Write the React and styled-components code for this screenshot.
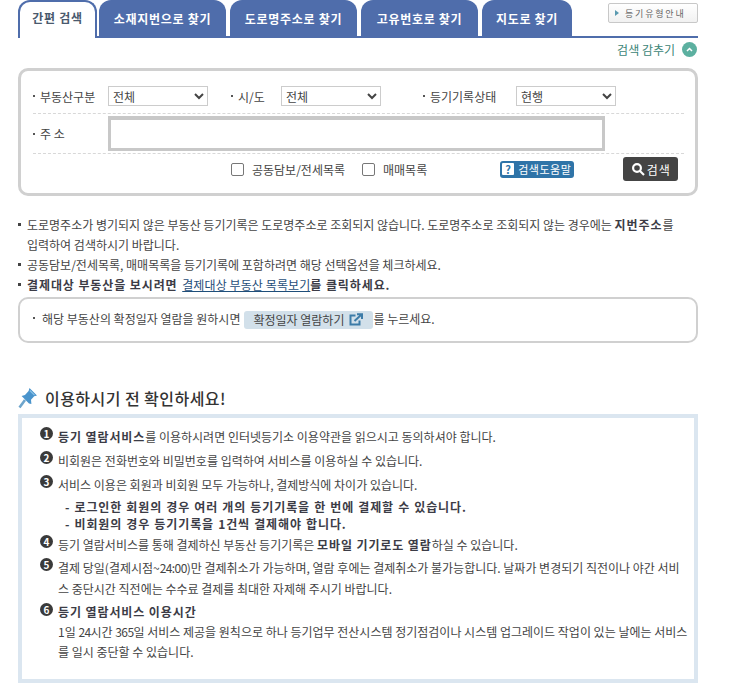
import React from 'react';
import styled, { createGlobalStyle } from 'styled-components';

const GlobalStyle = createGlobalStyle`
  html, body {
    margin: 0;
    padding: 0;
    background: #fff;
  }
  body {
    font-family: "Noto Sans CJK KR", "Noto Sans", sans-serif;
    font-size: 12px;
    color: #444;
  }
`;

const Page = styled.div`
  width: 680px;
  margin-left: 18px;
  display: flex;
  flex-direction: column;
`;

const TabBar = styled.div`
  display: flex;
  align-items: flex-end;
  height: 38px;
  border-bottom: 2px solid #4f6dab;
  box-sizing: border-box;
  justify-content: space-between;
`;

const Tabs = styled.div`
  display: flex;
  align-items: flex-end;
  height: 36px;
`;

const Tab = styled.div`
  width: ${props => props.w}px;
  height: ${props => (props.active ? 38 : 36)}px;
  margin-right: ${props => props.gap}px;
  margin-bottom: ${props => (props.active ? -2 : 0)}px;
  box-sizing: border-box;
  border-radius: 12px 12px 0 0;
  background: ${props => (props.active ? '#fff' : '#4f6dab')};
  border: ${props => (props.active ? '2px solid #4f6dab' : 'none')};
  border-bottom: none;
  color: ${props => (props.active ? '#4a5a6e' : '#fff')};
  font-size: 12px;
  font-weight: 700;
  letter-spacing: 0.7px;
  display: flex;
  justify-content: center;
  padding-top: ${props => (props.active ? 7 : 10)}px;
  line-height: 18px;
`;

const GuideButton = styled.div`
  width: 90px;
  height: 20px;
  margin-bottom: 13px;
  box-sizing: border-box;
  border: 1px solid #c8c8c8;
  border-radius: 2px;
  background: linear-gradient(#fff, #f1f1f1);
  display: flex;
  align-items: center;
  padding-left: 6px;
  gap: 6px;
  font-size: 9px;
  color: #666;
  letter-spacing: 1.8px;
  white-space: nowrap;
`;

const GuideArrow = styled.span`
  width: 0;
  height: 0;
  border-left: 4px solid #5a9ab0;
  border-top: 3px solid transparent;
  border-bottom: 3px solid transparent;
`;

const HideRow = styled.div`
  height: 30px;
  display: flex;
  justify-content: flex-end;
  align-items: center;
  gap: 7px;
  padding: 0 1px 7px 0;
  box-sizing: border-box;
  color: #3c8577;
  font-size: 12px;
`;

const HideIcon = styled.span`
  width: 15px;
  height: 15px;
  border-radius: 50%;
  background: #5cb0a0;
  display: flex;
  align-items: center;
  justify-content: center;
`;

const SearchBox = styled.div`
  height: 128px;
  box-sizing: border-box;
  border: 3px solid #d0d0d0;
  border-radius: 10px;
  padding: 11px 11px 0 12px;
`;

const FieldRow = styled.div`
  display: flex;
  align-items: center;
  height: 28px;
  border-bottom: 1px dashed #d8d8d8;
  padding-bottom: 3px;
`;

const AddressRow = styled.div`
  display: flex;
  align-items: center;
  height: 40px;
  box-sizing: border-box;
  border-bottom: 1px dashed #d8d8d8;
`;

const OptionRow = styled.div`
  display: flex;
  align-items: center;
  height: 30px;
  padding-left: 198px;
`;

const Label = styled.span`
  width: ${props => props.w}px;
  font-size: 12px;
  color: #444;
  display: flex;
  align-items: center;
  gap: 5px;
  flex-shrink: 0;
  white-space: nowrap;
`;

const Dot = styled.span`
  width: 2px;
  height: 2px;
  background: #555;
  flex-shrink: 0;
`;

const SelectBox = styled.select`
  width: ${props => props.w}px;
  height: 20px;
  border: 1px solid #ccc;
  background: #fff;
  color: #444;
  font-family: inherit;
  font-size: 12px;
  padding: 0;
  margin-right: ${props => props.gap}px;
  flex-shrink: 0;
  border-radius: 0;
`;

const AddressInput = styled.input`
  width: 497px;
  height: 35px;
  box-sizing: border-box;
  border: solid #c8c8c8;
  border-width: 4px 3px 3px;
  padding: 0 6px;
  outline: none;
`;

const Check = styled.span`
  width: 11px;
  height: 11px;
  border: 1px solid #777;
  border-radius: 2px;
  margin-right: 8px;
`;

const OptionText = styled.span`
  margin-right: ${props => props.gap}px;
  font-size: 12px;
  color: #444;
  white-space: nowrap;
`;

const HelpBadge = styled.span`
  display: flex;
  align-items: center;
  height: 17px;
  width: 74px;
  box-sizing: border-box;
  border-radius: 3px;
  background: #2f74a8;
  color: #fff;
  font-size: 11px;
  letter-spacing: 0.5px;
  padding: 0 0 0 2px;
  gap: 4px;
  white-space: nowrap;
`;

const HelpMark = styled.span`
  width: 12px;
  height: 12px;
  background: #fff;
  color: #2f74a8;
  font-size: 11px;
  font-weight: 700;
  line-height: 12px;
  text-align: center;
  border-radius: 1px;
`;

const SearchButton = styled.span`
  width: 55px;
  height: 24px;
  margin-left: 49px;
  background: #444;
  border-radius: 3px;
  color: #fff;
  font-size: 12px;
  letter-spacing: 1px;
  display: flex;
  align-items: center;
  justify-content: center;
  gap: 2px;
`;

const Notes = styled.ul`
  list-style: none;
  margin: 19px 0 0;
  padding: 0;
  font-size: 12px;
  line-height: 20px;
  color: #444;
`;

const Note = styled.li`
  position: relative;
  padding-left: 9px;
  white-space: nowrap;
  &::before {
    content: '';
    position: absolute;
    left: 0;
    top: 8px;
    width: 3px;
    height: 3px;
    background: #444;
  }
`;

const Strong = styled.b`
  font-weight: 700;
  color: #3c3c46;
  letter-spacing: 0.9px;
`;

const NoteLink = styled.span`
  margin-left: 2px;
  color: #1f4e79;
  letter-spacing: 0.1px;
  text-decoration: underline;
`;

const Digits = styled.span`
  letter-spacing: -0.6px;
`;

const ConfirmBox = styled.div`
  height: 46px;
  margin-top: 2px;
  box-sizing: border-box;
  border: 2px solid #d0d0d0;
  border-radius: 10px;
  padding: 0 0 4px 13px;
  display: flex;
  align-items: center;
  font-size: 12px;
  color: #444;
  white-space: nowrap;
`;

const ViewButton = styled.span`
  display: flex;
  align-items: center;
  gap: 5px;
  width: 129px;
  height: 18px;
  box-sizing: border-box;
  margin: 3px 0 0 4px;
  padding-left: 9px;
  background: #d2e0ea;
  border-radius: 3px;
`;

const Heading = styled.h2`
  margin: 40px 0 0;
  height: 29px;
  display: flex;
  align-items: center;
  gap: 7px;
  font-size: 16px;
  font-weight: 500;
  letter-spacing: 0.45px;
  color: #333;
`;

const InfoBox = styled.div`
  height: 269px;
  margin-top: 2px;
  box-sizing: border-box;
  border: 4px solid #dbe6f0;
  padding: 8px 6px 0 18px;
  font-size: 12px;
  color: #444;
`;

const InfoRow = styled.div`
  display: flex;
  align-items: flex-start;
  gap: 5px;
  margin-top: ${props => props.top || 0}px;
  line-height: ${props => props.lh || 21}px;
  white-space: nowrap;
`;

const NumberMark = styled.span`
  width: 13px;
  height: 13px;
  margin-top: 1px;
  border-radius: 50%;
  background: #3a3a3a;
  color: #fff;
  font-size: 10px;
  font-weight: 700;
  line-height: 13px;
  text-align: center;
  flex-shrink: 0;
`;

const SubRow = styled.div`
  padding-left: 25px;
  font-weight: 700;
  line-height: 17px;
  color: #3c3c46;
  letter-spacing: 0.9px;
  word-spacing: 0.5px;
  margin-top: ${props => props.top || 0}px;
`;

const PinIcon = () => (
  <svg width="20" height="22" viewBox="0 0 20 22">
    <path d="M11.5 1 L19 8.5 L16.2 9.2 L13 12.8 L13.4 17 L11 16.4 L3.6 9 L7 8 L10.6 4 Z" fill="#4a94cc" />
    <path d="M11.8 3.5 L16.5 8.2" stroke="#8cc2e6" strokeWidth="1.2" fill="none" />
    <path d="M7 13 L1.5 20.5" stroke="#6ea5cc" strokeWidth="2.6" fill="none" />
  </svg>
);

const ExternalIcon = () => (
  <svg width="14" height="13" viewBox="0 0 14 13" fill="none" stroke="#3d7ca8" strokeWidth="2">
    <path d="M6.5 2.5 H1.5 V11.5 H10.5 V7.5" />
    <path d="M5.5 8 L12 2 M8 1.2 H13 V6" />
  </svg>
);

const SearchGlass = () => (
  <svg width="14" height="14" viewBox="0 0 14 14" fill="none" stroke="#fff" strokeWidth="2.2">
    <circle cx="6" cy="6" r="3.9" />
    <path d="M9 9 L13 13" />
  </svg>
);

const tabs = [
  { label: '간편 검색', w: 79, gap: 2, active: true },
  { label: '소재지번으로 찾기', w: 127, gap: 4 },
  { label: '도로명주소로 찾기', w: 127, gap: 4 },
  { label: '고유번호로 찾기', w: 117, gap: 4 },
  { label: '지도로 찾기', w: 90, gap: 0 },
];

function App() {
  return (
    <Page>
      <GlobalStyle />
      <TabBar>
        <Tabs>
          {tabs.map(tab => (
            <Tab key={tab.label} w={tab.w} gap={tab.gap} active={tab.active}>
              {tab.label}
            </Tab>
          ))}
        </Tabs>
        <GuideButton>
          <GuideArrow />
          등기유형안내
        </GuideButton>
      </TabBar>

      <HideRow>
        검색 감추기
        <HideIcon>
          <svg width="7" height="5" viewBox="0 0 7 5" fill="none" stroke="#fff" strokeWidth="1.5">
            <path d="M1 4 L3.5 1.5 L6 4" />
          </svg>
        </HideIcon>
      </HideRow>

      <SearchBox>
        <FieldRow>
          <Label w={75}><Dot />부동산구분</Label>
          <SelectBox w={100} gap={23}><option>전체</option></SelectBox>
          <Label w={50}><Dot />시/도</Label>
          <SelectBox w={100} gap={42}><option>전체</option></SelectBox>
          <Label w={93}><Dot />등기기록상태</Label>
          <SelectBox w={100} gap={0}><option>현행</option></SelectBox>
        </FieldRow>
        <AddressRow>
          <Label w={75}><Dot />주 소</Label>
          <AddressInput />
        </AddressRow>
        <OptionRow>
          <Check />
          <OptionText gap={17}>공동담보/전세목록</OptionText>
          <Check />
          <OptionText gap={73}>매매목록</OptionText>
          <HelpBadge><HelpMark>?</HelpMark>검색도움말</HelpBadge>
          <SearchButton><SearchGlass />검색</SearchButton>
        </OptionRow>
      </SearchBox>

      <Notes>
        <Note>
          도로명주소가 병기되지 않은 부동산 등기기록은 도로명주소로 조회되지 않습니다. 도로명주소로 조회되지 않는 경우에는 <Strong>지번주소</Strong>를
          <br />
          입력하여 검색하시기 바랍니다.
        </Note>
        <Note>공동담보/전세목록, 매매목록을 등기기록에 포함하려면 해당 선택옵션을 체크하세요.</Note>
        <Note>
          <Strong>결제대상 부동산을 보시려면</Strong> <NoteLink>결제대상 부동산 목록보기</NoteLink><Strong>를 클릭하세요.</Strong>
        </Note>
      </Notes>

      <ConfirmBox>
        <Label w={9}><Dot /></Label>
        해당 부동산의 확정일자 열람을 원하시면
        <ViewButton>확정일자 열람하기 <ExternalIcon /></ViewButton>
        를 누르세요.
      </ConfirmBox>

      <Heading><PinIcon />이용하시기 전 확인하세요!</Heading>

      <InfoBox>
        <InfoRow>
          <NumberMark>1</NumberMark>
          <span><Strong>등기 열람서비스</Strong>를 이용하시려면 인터넷등기소 이용약관을 읽으시고 동의하셔야 합니다.</span>
        </InfoRow>
        <InfoRow top={3}>
          <NumberMark>2</NumberMark>
          <span>비회원은 전화번호와 비밀번호를 입력하여 서비스를 이용하실 수 있습니다.</span>
        </InfoRow>
        <InfoRow top={3}>
          <NumberMark>3</NumberMark>
          <span>서비스 이용은 회원과 비회원 모두 가능하나, 결제방식에 차이가 있습니다.</span>
        </InfoRow>
        <SubRow top={3}>- 로그인한 회원의 경우 여러 개의 등기기록을 한 번에 결제할 수 있습니다.</SubRow>
        <SubRow>- 비회원의 경우 등기기록을 1건씩 결제해야 합니다.</SubRow>
        <InfoRow top={2}>
          <NumberMark>4</NumberMark>
          <span>등기 열람서비스를 통해 결제하신 부동산 등기기록은 <Strong>모바일 기기로도 열람</Strong>하실 수 있습니다.</span>
        </InfoRow>
        <InfoRow top={2}>
          <NumberMark>5</NumberMark>
          <span>
            결제 당일(결제시점~<Digits>24:00</Digits>)만 결제취소가 가능하며, 열람 후에는 결제취소가 불가능합니다. 날짜가 변경되기 직전이나 야간 서비
            <br />
            스 중단시간 직전에는 수수료 결제를 최대한 자제해 주시기 바랍니다.
          </span>
        </InfoRow>
        <InfoRow top={3} lh={20}>
          <NumberMark>6</NumberMark>
          <span>
            <Strong>등기 열람서비스 이용시간</Strong>
            <br />
            1일 <Digits>24</Digits>시간 <Digits>365</Digits>일 서비스 제공을 원칙으로 하나 등기업무 전산시스템 정기점검이나 시스템 업그레이드 작업이 있는 날에는 서비스
            <br />
            를 일시 중단할 수 있습니다.
          </span>
        </InfoRow>
      </InfoBox>
    </Page>
  );
}

export default App;
